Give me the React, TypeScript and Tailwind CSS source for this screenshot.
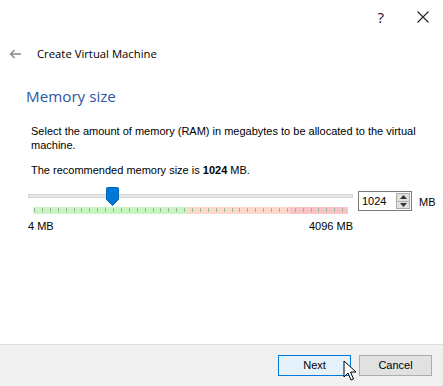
import React from "react";

const ticks = Array.from({ length: 40 }, (_, i) => i);
const body = { fontFamily: '"Liberation Sans", Arial, sans-serif' };
const ui = { fontFamily: '"Open Sans", "Noto Sans", sans-serif' };

function Thumb() {
  return (
    <svg width="13" height="19" viewBox="0 0 13 19" className="absolute left-[77px] top-[-8px]">
      <path d="M0.5 1.5 Q0.5 0.5 1.5 0.5 H11.5 Q12.5 0.5 12.5 1.5 V12.5 L6.5 18.5 L0.5 12.5 Z" fill="#0078d7" stroke="#0066b8" />
    </svg>
  );
}

function Cursor() {
  return (
    <svg width="14" height="22" viewBox="0 0 14 22" className="absolute left-[343px] top-[360px]">
      <path d="M1 1 V17 L5 13 L8 20 L10.5 19 L7.5 12 H13 Z" fill="#fff" stroke="#000" strokeWidth="1" strokeLinejoin="miter" />
    </svg>
  );
}

export default function App() {
  return (
    <div className="relative w-[443px] h-[386px] bg-white overflow-hidden flex flex-col text-[#000]" style={body}>
      {/* title bar buttons */}
      <div className="flex justify-end h-[34px] pt-[8px] pr-[14px] gap-[33px] text-[#111]">
        <span className="text-[15px] leading-[18px]" style={ui}>?</span>
        <svg width="12" height="12" viewBox="0 0 12 12" className="mt-[3px]">
          <path d="M0.5 0.5 L11.5 11.5 M11.5 0.5 L0.5 11.5" stroke="#222" strokeWidth="1.1" />
        </svg>
      </div>

      {/* header */}
      <div className="flex items-center h-[38px] pl-[9px] pt-[2px]">
        <svg width="13" height="10" viewBox="0 0 13 10">
          <path d="M12 5 H1.5 M5.5 1 L1.5 5 L5.5 9" stroke="#888" strokeWidth="1.4" fill="none" />
        </svg>
        <span className="ml-[15px] text-[11.3px]" style={ui}>Create Virtual Machine</span>
      </div>

      <div className="pl-[26px] mt-[13px] text-[15.2px] leading-[22px] text-[#2d56a3]" style={ui}>Memory size</div>

      <div className="pl-[31px] pr-[8px] mt-[17px] text-[11px] leading-[14px]">
        <p>Select the amount of memory (RAM) in megabytes to be allocated to the virtual machine.</p>
        <p className="mt-[11px]">The recommended memory size is <b>1024</b> MB.</p>
      </div>

      {/* slider row */}
      <div className="flex items-start mt-[9px] pl-[28px]">
        <div className="w-[325px]">
          <div className="relative h-[4px] mt-[8px] bg-[#e7e7e7] border border-[#d6d6d6]">
            <Thumb />
          </div>
          <div className="flex h-[7px] mt-[9px] ml-[5px] w-[315px]">
            <div className="w-[155px] bg-[#c9f5c3]" />
            <div className="w-[102px] bg-[#fbd7c7]" />
            <div className="w-[58px] bg-[#f9c4c6]" />
          </div>
          <div className="relative h-0 ml-[5px]">
            {ticks.map((i) => (
              <div key={i} className="absolute top-[-6px] w-px h-[4px] bg-[#9bb59a]" style={{ left: 1 + i * 7.9 }} />
            ))}
          </div>
          <div className="flex justify-between mt-[4px] text-[11px]">
            <span>4 MB</span>
            <span>4096 MB</span>
          </div>
        </div>
        <div className="ml-[5px] mt-[5px] flex items-center w-[54px] h-[20px] border border-[#7a7a7a] bg-white">
          <span className="flex-1 pl-[3px] text-[11px]">1024</span>
          <div className="flex flex-col w-[14px] h-[16px] mr-[1px] border border-[#adadad] bg-[#e1e1e1]">
            <div className="flex-1 flex items-center justify-center border-b border-[#adadad]">
              <svg width="7" height="4" viewBox="0 0 7 4"><path d="M0 4 L3.5 0 L7 4 Z" fill="#333" /></svg>
            </div>
            <div className="flex-1 flex items-center justify-center">
              <svg width="7" height="4" viewBox="0 0 7 4"><path d="M0 0 L3.5 4 L7 0 Z" fill="#333" /></svg>
            </div>
          </div>
        </div>
        <span className="ml-[7px] mt-[8px] text-[11px]">MB</span>
      </div>

      <div className="flex-1" />

      {/* footer */}
      <div className="h-[42px] bg-[#f0f0f0] border-t border-[#dfdfdf] flex items-center justify-end gap-[8px] pr-[11px]">
        <button className="w-[73px] h-[21px] border border-[#0078d7] bg-[#e5f1fb] text-[11px]">Next</button>
        <button className="w-[73px] h-[21px] border border-[#adadad] bg-[#e1e1e1] text-[11px]">Cancel</button>
      </div>

      <Cursor />
    </div>
  );
}
